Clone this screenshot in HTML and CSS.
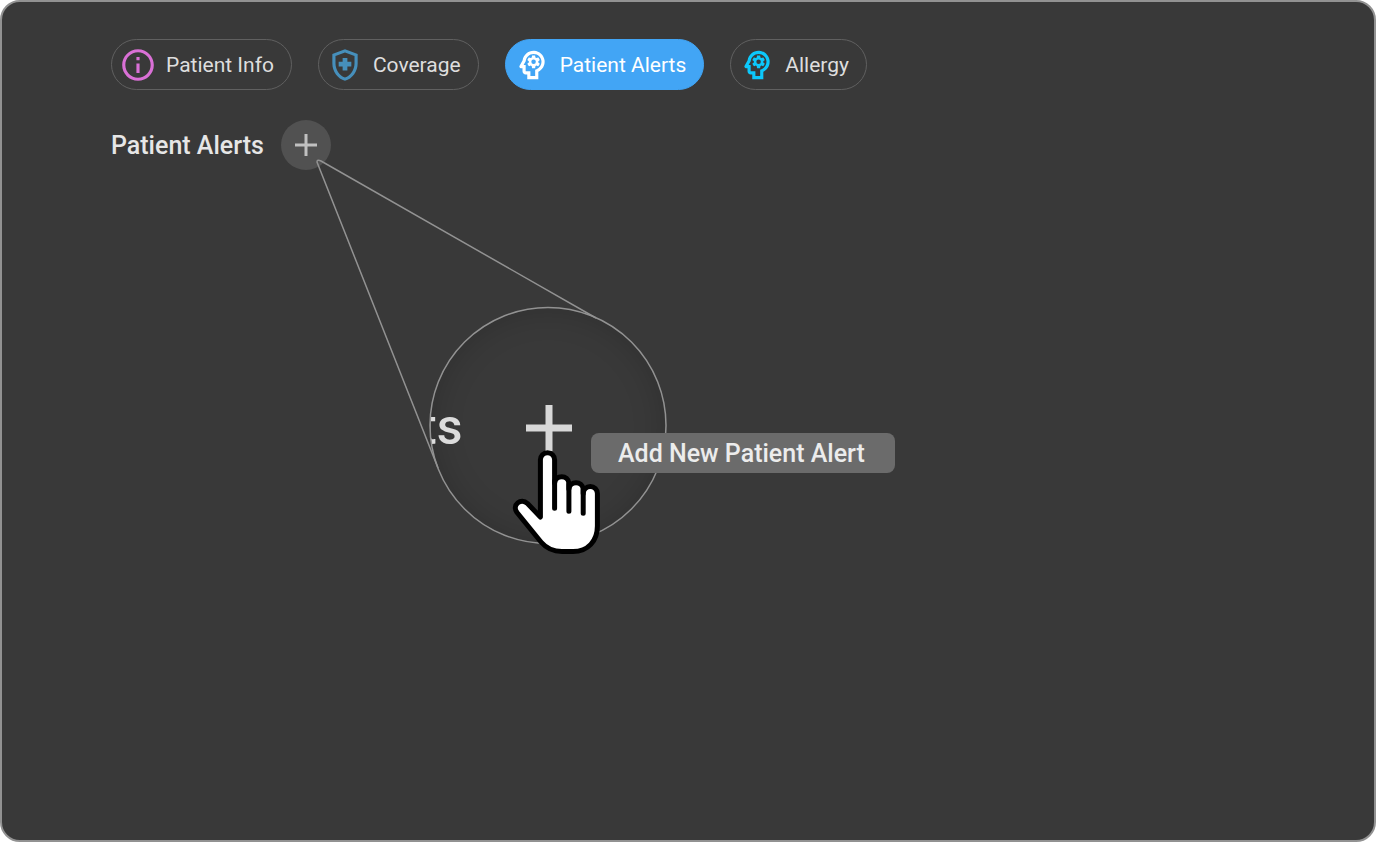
FILE: index.html
```html
<!DOCTYPE html>
<html lang="en">
<head>
<meta charset="utf-8">
<title>Patient Alerts</title>
<link rel="stylesheet" href="styles.css">
</head>
<body>
<svg class="sprite" aria-hidden="true">
  <symbol id="head" viewBox="0 0 24 24">
    <path d="M19.94 9.06c-.43-3.27-3.23-5.86-6.53-6.05C13.27 3 13.14 3 13 3 9.47 3 6.57 5.61 6.08 9l-1.93 3.48C3.74 13.14 4.22 14 5 14h1v2c0 1.1.9 2 2 2h1v3h7v-4.68c2.62-1.25 4.35-4.08 3.94-7.26zm-5.05 5.57l-.89.42V19h-3v-3H8v-4H6.7l1.33-2.33C8.21 7.06 10.35 5 13 5c2.76 0 5 2.24 5 5 0 2.09-1.29 3.88-3.11 4.63z"/>
    <path fill-rule="evenodd" d="M16 10c0 .13-.01.26-.02.39l.83.66c.08.06.1.16.05.25l-.8 1.39c-.05.09-.16.12-.24.09l-.99-.4c-.21.16-.43.29-.67.39L14 13.83c-.01.1-.1.17-.2.17h-1.6c-.1 0-.18-.07-.2-.17l-.15-1.06c-.25-.1-.47-.23-.68-.39l-.99.4c-.09.03-.2 0-.25-.09l-.8-1.39c-.05-.08-.03-.19.05-.25l.84-.66c-.01-.13-.02-.26-.02-.39s.02-.27.04-.39l-.85-.66c-.08-.06-.1-.16-.05-.26l.8-1.38c.05-.09.15-.12.24-.09l1 .4c.2-.15.43-.29.67-.39L12 6.17c.02-.1.1-.17.2-.17h1.6c.1 0 .18.07.2.17l.15 1.06c.24.1.46.23.67.39l1-.4c.09-.03.2 0 .24.09l.8 1.38c.05.09.03.2-.05.26l-.85.66c.03.12.04.25.04.39zM13 8.57a1.43 1.43 0 1 0 0 2.86 1.43 1.43 0 0 0 0-2.86z"/>
  </symbol>
</svg>
<main class="panel">
  <nav class="chips" aria-label="Patient sections">
    <button class="chip" type="button">
      <svg class="icon icon-info" viewBox="0 0 24 24" aria-hidden="true"><path d="M11 7h2v2h-2zm0 4h2v6h-2zm1-9C6.48 2 2 6.48 2 12s4.480 10 10 10 10-4.480 10-10S17.520 2 12 2zm0 18c-4.410 0-8-3.590-8-8s3.590-8 8-8 8 3.590 8 8-3.590 8-8 8z"/></svg>
      Patient Info
    </button>
    <button class="chip" type="button">
      <svg class="icon icon-shield" viewBox="0 0 24 24" aria-hidden="true"><path d="M10.500 13H8v-3h2.500V7.500h3V10H16v3h-2.500v2.500h-3V13zM12 2L4 5v6.090c0 5.050 3.410 9.760 8 10.910 4.590-1.150 8-5.860 8-10.910V5l-8-3zm6 9.090c0 4-2.550 7.700-6 8.830-3.450-1.130-6-4.820-6-8.830v-4.700l6-2.250 6 2.250v4.700z"/></svg>
      Coverage
    </button>
    <button class="chip chip-active" type="button" aria-pressed="true">
      <svg class="icon" aria-hidden="true"><use href="#head"/></svg>
      Patient Alerts
    </button>
    <button class="chip" type="button">
      <svg class="icon icon-allergy" aria-hidden="true"><use href="#head"/></svg>
      Allergy
    </button>
  </nav>

  <header class="heading">
    <h1 class="title">Patient Alerts</h1>
    <button class="add" type="button" aria-label="Add New Patient Alert" aria-describedby="add-tip">
      <svg class="add-icon" viewBox="0 0 24 24" aria-hidden="true"><path d="M12 1v22M1 12h22"/></svg>
    </button>
  </header>

  <div class="callout">
    <div class="lens">
      <span class="lens-text">ts</span>
      <svg class="lens-plus" viewBox="0 0 46 46" aria-hidden="true"><path d="M23 0v46M0 23h46"/></svg>
    </div>
    <svg class="lines" viewBox="0 0 680 440" aria-hidden="true">
      <circle cx="548" cy="311.500" r="118"/>
      <path d="M438 354L317 48Q317 45 321 47L596 204"/>
    </svg>
    <div class="tip" id="add-tip" role="tooltip">Add New Patient Alert</div>
    <svg class="hand" viewBox="510 447 94 110" aria-hidden="true">
      <path class="hand-shape" d="M540.400 517V459.800a7.100 7.100 0 0 1 14.200 0V483a7.200 7.200 0 0 1 14.300 0V489a7.200 7.200 0 0 1 14.300 0V493.500a7.100 7.100 0 0 1 14.200 0V526C597.400 541 588 551.500 573 551.500H562C553 551.500 546.500 548.500 541 542L517 512.500C511.500 505 521 497.500 527.500 503.500Z"/>
      <path class="hand-gaps" d="M554.600 481V508.300M568.900 484V511.300M583.200 490V513.300"/>
    </svg>
  </div>
</main>
</body>
</html>
```
FILE: styles.css
```css
* { box-sizing: border-box; }

body {
  margin: 0;
  background: #fff;
  color: #e2e2e2;
  font-family: Roboto, "Liberation Sans", sans-serif;
}

.sprite {
  position: absolute;
  width: 0;
  height: 0;
}

.panel {
  position: relative;
  min-height: 100vh;
  padding: 37px 109px;
  overflow: hidden;
  background: #393939;
  border: 2px solid #929292;
  border-radius: 20px;
}

.chips {
  display: flex;
  flex-wrap: wrap;
  gap: 26px;
}

.chip {
  display: flex;
  align-items: center;
  gap: 9px;
  height: 51px;
  padding: 0 17px 0 7px;
  background: transparent;
  border: 1px solid #606060;
  border-radius: 26px;
  color: #dedede;
  font: 400 21px/24px Roboto, "Liberation Sans", sans-serif;
  white-space: nowrap;
}

.chip-active {
  background: #42a5f5;
  border-color: #42a5f5;
  color: #fff;
}

.icon {
  width: 38px;
  height: 38px;
  fill: currentColor;
}

.icon-info { fill: #da70d6; }
.icon-shield { fill: #468fbb; }
.icon-allergy { fill: #0cc8fb; }

.heading {
  display: flex;
  align-items: center;
  gap: 17px;
  margin-top: 30px;
}

.title {
  margin: 0;
  padding-top: 2px;
  color: #e6e6e6;
  font-size: 25px;
  font-weight: 500;
  line-height: 32px;
}

.add {
  display: grid;
  place-items: center;
  width: 50px;
  height: 50px;
  padding: 0;
  background: #515151;
  border: 0;
  border-radius: 50%;
}

.add-icon {
  width: 24px;
  height: 24px;
  fill: none;
  stroke: #c0c0c0;
  stroke-width: 3;
}

/* Magnified view floating over the panel, anchored to the add button */
.callout {
  position: absolute;
  top: 112px;
  left: -2px;
  pointer-events: none;
}

.lines {
  position: absolute;
  top: 0;
  left: 0;
  width: 680px;
  height: 440px;
  fill: none;
  stroke: #929292;
  stroke-width: 1.5;
}

.lens {
  position: absolute;
  top: 194px;
  left: 430px;
  width: 236px;
  height: 236px;
  overflow: hidden;
  background: #393939;
  border-radius: 50%;
  box-shadow: inset 0 0 32px rgba(0, 0, 0, 0.18);
}

.lens-text {
  position: absolute;
  top: 91px;
  left: -10px;
  color: #dcdcdc;
  font-size: 50px;
  font-weight: 500;
  line-height: 56px;
}

.lens-plus {
  position: absolute;
  top: 97px;
  left: 96px;
  width: 46px;
  height: 46px;
  fill: none;
  stroke: #d8d8d8;
  stroke-width: 7;
}

.tip {
  position: absolute;
  top: 319px;
  left: 591px;
  padding: 5px 30px 3px 27px;
  background: #6b6b6b;
  border-radius: 8px;
  color: #ececec;
  font-size: 25px;
  font-weight: 500;
  line-height: 32px;
  white-space: nowrap;
}

.hand {
  position: absolute;
  top: 333px;
  left: 510px;
  width: 94px;
  height: 110px;
}

.hand-shape {
  fill: #fff;
  stroke: #000;
  stroke-width: 5;
  stroke-linejoin: round;
}

.hand-gaps {
  fill: none;
  stroke: #000;
  stroke-width: 5;
  stroke-linecap: round;
}
```
